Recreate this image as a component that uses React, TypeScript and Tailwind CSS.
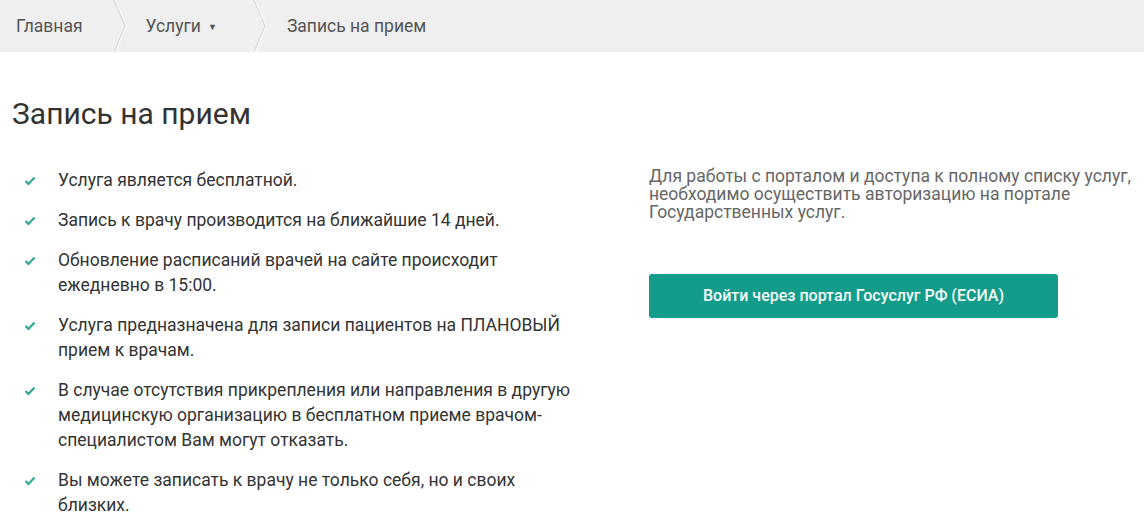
import React from "react";

const Sep = () => (
  <svg width="14" height="52" viewBox="0 0 14 52" className="shrink-0">
    <polyline points="1,0 12,26 1,52" fill="none" stroke="#d9d9d9" strokeWidth="1.2" />
    <polyline points="2.5,0 13.5,26 2.5,52" fill="none" stroke="#fbfbfb" strokeWidth="1" />
  </svg>
);

const Check = () => (
  <svg width="12" height="10" viewBox="0 0 12 10" className="shrink-0 mt-[8px]">
    <polyline points="1.5,5 4.5,8 10.5,1.5" fill="none" stroke="#2aa891" strokeWidth="2.2" />
  </svg>
);

const items = [
  ["Услуга является бесплатной."],
  ["Запись к врачу производится на ближайшие 14 дней."],
  ["Обновление расписаний врачей на сайте происходит", "ежедневно в 15:00."],
  ["Услуга предназначена для записи пациентов на ПЛАНОВЫЙ", "прием к врачам."],
  [
    "В случае отсутствия прикрепления или направления в другую",
    "медицинскую организацию в бесплатном приеме врачом-",
    "специалистом Вам могут отказать.",
  ],
  ["Вы можете записать к врачу не только себя, но и своих", "близких."],
];

export default function App() {
  return (
    <div className="w-[1144px] h-[530px] overflow-hidden bg-white" style={{ fontFamily: "Roboto, 'Noto Sans', sans-serif" }}>
      <div className="h-[52px] bg-[#efefef] flex items-center text-[17.5px] text-[#555]">
        <div className="pl-[16px] pr-[30px]">Главная</div>
        <Sep />
        <div className="pl-[19px] pr-[36px] flex items-center gap-[7px]">
          Услуги
          <span className="text-[9px] mt-[3px]">▼</span>
        </div>
        <Sep />
        <div className="pl-[20px]">Запись на прием</div>
      </div>

      <div className="flex">
        <div className="w-[649px] shrink-0">
          <h1 className="pl-[12px] mt-[44px] text-[30px] leading-[36px] text-[#333] font-normal">Запись на прием</h1>
          <ul className="mt-[36px] flex flex-col gap-[15px]">
            {items.map((lines, i) => (
              <li key={i} className="flex pl-[24px]">
                <Check />
                <div className="pl-[22px] text-[17.5px] leading-[25px] text-[#333]">
                  {lines.map((l, j) => (
                    <div key={j}>{l}</div>
                  ))}
                </div>
              </li>
            ))}
          </ul>
        </div>
        <div className="flex-1 pt-[115px]">
          <div className="text-[17.5px] leading-[18px] text-[#666]">
            <div>Для работы с порталом и доступа к полному списку услуг,</div>
            <div>необходимо осуществить авторизацию на портале</div>
            <div>Государственных услуг.</div>
          </div>
          <button className="mt-[53px] w-[409px] h-[44px] rounded-[3px] bg-[#139c89] text-[#f4fbfa] text-[16px] font-medium flex items-center justify-center">
            Войти через портал Госуслуг РФ (ЕСИА)
          </button>
        </div>
      </div>
    </div>
  );
}
